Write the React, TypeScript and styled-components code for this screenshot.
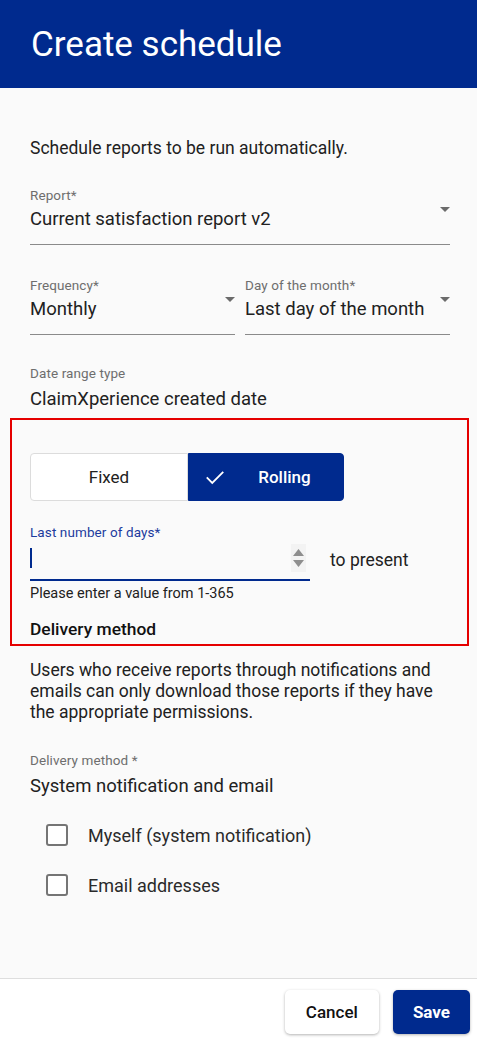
import React from "react";
import styled, { createGlobalStyle } from "styled-components";

const Global = createGlobalStyle`
  html, body { margin: 0; padding: 0; }
  body { font-family: Roboto, "Liberation Sans", Arial, sans-serif; background: #fafafa; color: #212121; }
  * { box-sizing: border-box; }
`;

const BLUE = "#002a8e";

const Page = styled.div`
  display: flex;
  flex-direction: column;
  min-height: 100vh;
  width: 477px;
`;

const Header = styled.header`
  height: 88px;
  background: ${BLUE};
  display: flex;
  align-items: center;
  padding: 0 31px;
`;

const Title = styled.h1`
  margin: 0;
  color: #fff;
  font-weight: 400;
  font-size: 35px;
  letter-spacing: 0;
`;

const Body = styled.main`
  flex: 1;
  padding: 50px 27px 0 30px;
  background: #fafafa;
`;

const Intro = styled.p`
  margin: 0;
  font-size: 17.5px;
  line-height: 20px;
  color: #212121;
`;

const FieldRow = styled.div<{ $mt: number }>`
  display: flex;
  gap: 10px;
  margin-top: ${(p) => p.$mt}px;
`;

const SelectField = styled.div`
  flex: 1;
  display: flex;
  align-items: center;
  border-bottom: 1px solid #8a8a8a;
  padding-bottom: 13px;
  min-width: 0;
`;

const FieldStack = styled.div`
  flex: 1;
  display: flex;
  flex-direction: column;
  gap: 4px;
  min-width: 0;
`;

const Label = styled.span<{ $color?: string }>`
  font-size: 13.5px;
  line-height: 16px;
  color: ${(p) => p.$color || "#6e6e6e"};
  letter-spacing: 0.1px;
`;

const Value = styled.span`
  font-size: 18.5px;
  line-height: 24px;
  color: #212121;
  white-space: nowrap;
`;

const Arrow = styled.span`
  flex: none;
  width: 0;
  height: 0;
  border-left: 5.5px solid transparent;
  border-right: 5.5px solid transparent;
  border-top: 5.5px solid #6b6b6b;
  margin-left: 4px;
`;

const PlainField = styled.div`
  display: flex;
  flex-direction: column;
  gap: 6px;
  margin-top: 30px;
`;

const Highlight = styled.section`
  margin: 7px -19px 0 -20px;
  border: 2px solid #e50000;
  padding: 33px 16px 5px 18px;
`;

const Toggle = styled.div`
  display: flex;
  width: 314px;
  height: 48px;
`;

const Segment = styled.button<{ $active?: boolean }>`
  flex: ${(p) => (p.$active ? "0 0 156px" : "0 0 158px")};
  display: flex;
  align-items: center;
  font-family: inherit;
  font-size: 17px;
  cursor: pointer;
  padding: ${(p) => (p.$active ? "0 0 0 15px" : "0")};
  border: 1px solid ${(p) => (p.$active ? BLUE : "#dcdcdc")};
  border-radius: ${(p) => (p.$active ? "0 4px 4px 0" : "4px 0 0 4px")};
  background: ${(p) => (p.$active ? BLUE : "#fff")};
  color: ${(p) => (p.$active ? "#fff" : "#212121")};
  font-weight: ${(p) => (p.$active ? 500 : 400)};
`;

const SegText = styled.span`
  flex: 1;
  text-align: center;
`;

const DaysBlock = styled.div`
  margin-top: 23px;
  display: flex;
  flex-direction: column;
`;

const InputRow = styled.div`
  display: flex;
  align-items: center;
  gap: 20px;
`;

const InputBox = styled.div`
  width: 280px;
  height: 41px;
  border-bottom: 2px solid ${BLUE};
  display: flex;
  align-items: center;
  justify-content: space-between;
  padding-bottom: 4px;
`;

const Caret = styled.span`
  width: 1.5px;
  height: 20px;
  background: ${BLUE};
`;

const Spinner = styled.span`
  width: 15px;
  height: 28px;
  background: #f3f3f3;
  display: flex;
  flex-direction: column;
  justify-content: center;
  align-items: center;
  gap: 4px;
  margin-right: 4px;
`;

const Suffix = styled.span`
  font-size: 17.5px;
  color: #212121;
  margin-top: -2px;
`;

const Helper = styled.span`
  margin-top: 5px;
  font-size: 14.5px;
  line-height: 16px;
  color: #212121;
`;

const SectionTitle = styled.h2`
  margin: 17px 0 0;
  font-size: 17.4px;
  line-height: 20px;
  font-weight: 500;
  color: #111;
`;

const Para = styled.p`
  margin: 14px 0 0;
  font-size: 17.5px;
  line-height: 21px;
  color: #212121;
`;

const DeliveryField = styled(PlainField)`
  margin-top: 29px;
`;

const CheckList = styled.div`
  margin-top: 26px;
  display: flex;
  flex-direction: column;
  gap: 28px;
  padding-left: 16px;
`;

const CheckRow = styled.label`
  display: flex;
  align-items: center;
  gap: 20px;
  font-size: 18px;
  color: #2a2a2a;
  cursor: pointer;
`;

const Box = styled.span`
  width: 22px;
  height: 22px;
  border: 2px solid #757575;
  border-radius: 3px;
  background: #fff;
`;

const Footer = styled.footer`
  height: 66px;
  background: #fff;
  border-top: 1px solid #dedede;
  display: flex;
  justify-content: flex-end;
  align-items: center;
  gap: 14px;
  padding: 0 7px 0 0;
`;

const Button = styled.button<{ $primary?: boolean }>`
  height: 44px;
  padding: 0 ${(p) => (p.$primary ? "20px" : "21px")};
  border-radius: 5px;
  border: none;
  font-family: inherit;
  font-size: 17px;
  font-weight: ${(p) => (p.$primary ? 700 : 500)};
  background: ${(p) => (p.$primary ? BLUE : "#fff")};
  color: ${(p) => (p.$primary ? "#fff" : "#111")};
  box-shadow: 0 1px 3px rgba(0, 0, 0, 0.3);
  cursor: pointer;
`;

const Select = ({ label, value }: { label: string; value: string }) => (
  <SelectField>
    <FieldStack>
      <Label>{label}</Label>
      <Value>{value}</Value>
    </FieldStack>
    <Arrow />
  </SelectField>
);

export default function App() {
  return (
    <Page>
      <Global />
      <Header>
        <Title>Create schedule</Title>
      </Header>
      <Body>
        <Intro>Schedule reports to be run automatically.</Intro>
        <FieldRow $mt={29}>
          <Select label="Report*" value="Current satisfaction report v2" />
        </FieldRow>
        <FieldRow $mt={32}>
          <Select label="Frequency*" value="Monthly" />
          <Select label="Day of the month*" value="Last day of the month" />
        </FieldRow>
        <PlainField>
          <Label>Date range type</Label>
          <Value>ClaimXperience created date</Value>
        </PlainField>

        <Highlight>
          <Toggle>
            <Segment>
              <SegText>Fixed</SegText>
            </Segment>
            <Segment $active>
              <svg width="22" height="22" viewBox="0 0 24 24" fill="none" stroke="#fff" strokeWidth="2">
                <path d="M3 12.5l6 6L21 6.5" />
              </svg>
              <SegText>Rolling</SegText>
            </Segment>
          </Toggle>
          <DaysBlock>
            <Label $color="#1d3c9e">Last number of days*</Label>
            <InputRow>
              <InputBox>
                <Caret />
                <Spinner>
                  <svg width="11" height="7" viewBox="0 0 11 7">
                    <path d="M5.5 0L11 7H0z" fill="#8e8e8e" />
                  </svg>
                  <svg width="11" height="7" viewBox="0 0 11 7">
                    <path d="M0 0h11L5.5 7z" fill="#8e8e8e" />
                  </svg>
                </Spinner>
              </InputBox>
              <Suffix>to present</Suffix>
            </InputRow>
            <Helper>Please enter a value from 1-365</Helper>
          </DaysBlock>
          <SectionTitle>Delivery method</SectionTitle>
        </Highlight>

        <Para>
          Users who receive reports through notifications and emails can only download those reports if they have
          the appropriate permissions.
        </Para>
        <DeliveryField>
          <Label>Delivery method *</Label>
          <Value>System notification and email</Value>
        </DeliveryField>
        <CheckList>
          <CheckRow>
            <Box />
            Myself (system notification)
          </CheckRow>
          <CheckRow>
            <Box />
            Email addresses
          </CheckRow>
        </CheckList>
      </Body>
      <Footer>
        <Button>Cancel</Button>
        <Button $primary>Save</Button>
      </Footer>
    </Page>
  );
}
